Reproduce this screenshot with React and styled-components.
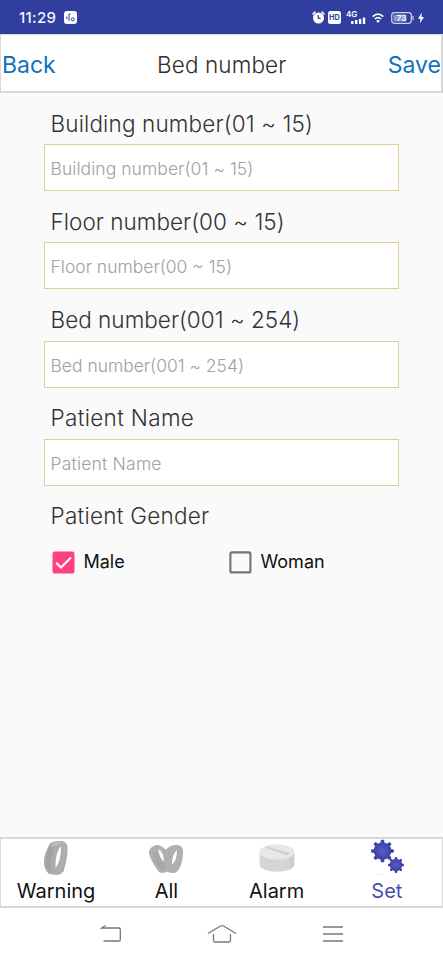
import React, {useState} from "react";
import styled, {createGlobalStyle} from "styled-components";

const GlobalStyle = createGlobalStyle`
    * {
        box-sizing: border-box;
    }
    body {
        margin: 0;
        background: #fafafa;
        font-family: Inter, "Liberation Sans", sans-serif;
    }
`;

const Screen = styled("div")`
    width: 443px;
    height: 960px;
    display: flex;
    flex-direction: column;
    overflow: hidden;
    background: #fafafa;
`;

const StatusBar = styled("div")`
    height: 34px;
    flex: none;
    display: flex;
    align-items: center;
    justify-content: space-between;
    padding: 1px 19px 0 19px;
    background: #303f9f;
    color: #f4f5ff;
`;

const StatusGroup = styled("div")`
    display: flex;
    align-items: center;
    gap: ${({$gap}) => $gap}px;
    & svg {
        display: block;
    }
`;

const Clock = styled("span")`
    font-size: 15px;
    font-weight: 500;
    line-height: 18px;
    letter-spacing: 0.3px;
`;

const Header = styled("div")`
    height: 59px;
    flex: none;
    display: flex;
    align-items: center;
    justify-content: space-between;
    border: 2px solid #d8d8d8;
    border-top-width: 1px;
    border-left-width: 1px;
    background: #fff;
    padding: 4px 0 0 1px;
`;

const HeaderAction = styled("button")`
    border: 0;
    padding: 0;
    background: none;
    font-family: inherit;
    font-size: 23px;
    line-height: 28px;
    color: #1370bd;
`;

const Title = styled("span")`
    font-size: 22.5px;
    font-weight: 350;
    line-height: 28px;
    color: #2e2e2e;
    letter-spacing: 0.1px;
`;

const Form = styled("div")`
    flex: 1;
    padding: 0 44px;
`;

const Label = styled("label")`
    display: block;
    height: 51.2px;
    padding: 15.5px 0 0 6.5px;
    font-size: 22.5px;
    font-weight: 350;
    line-height: 30px;
    color: #333;
    white-space: nowrap;
    letter-spacing: ${({$spacing}) => $spacing}px;
`;

const Input = styled("input")`
    display: block;
    width: 355px;
    height: 47px;
    padding: 3px 6px 1px 5.5px;
    border: 1px solid #dfcf9f;
    border-radius: 0;
    outline: none;
    background: #fff;
    font-family: inherit;
    font-size: 17.5px;
    font-weight: 350;
    letter-spacing: ${({$spacing}) => $spacing}px;
    &::placeholder {
        color: #a0a0a0;
    }
`;

const Options = styled("div")`
    display: flex;
    padding: 12.5px 0 0 8px;
`;

const Option = styled("button")`
    width: 177px;
    flex: none;
    display: flex;
    align-items: center;
    gap: 8.5px;
    padding: 0;
    border: 0;
    background: none;
    font-family: inherit;
    font-size: 18px;
    line-height: 26px;
    color: #111;
    & svg {
        display: block;
        flex: none;
    }
`;

const TabBar = styled("div")`
    height: 71px;
    flex: none;
    display: flex;
    border: 2px solid #d8d8d8;
    border-left-width: 1px;
    border-right-width: 1px;
    background: #fff;
`;

const Tab = styled("button")`
    flex: 1;
    display: flex;
    flex-direction: column;
    align-items: center;
    padding: 0;
    border: 0;
    background: none;
    font-family: inherit;
    font-size: 20px;
    line-height: 29px;
    color: ${({$active}) => ($active ? "#4450b0" : "#111")};
    & svg {
        display: block;
    }
`;

const NavBar = styled("div")`
    height: 52px;
    flex: none;
    display: flex;
    align-items: center;
    justify-content: space-between;
    padding: 0 99px;
    background: #fff;
`;

const fields = [
    {text: "Building number(01 ~ 15)", labelSpacing: 0.14, spacing: 0.06},
    {text: "Floor number(00 ~ 15)", labelSpacing: 0.03, spacing: 0},
    {text: "Bed number(001 ~ 254)", labelSpacing: 0.02, spacing: -0.02},
    {text: "Patient Name", labelSpacing: 0.32, spacing: 0.2},
];

const AppBadge = () => (
    <svg width="13" height="13" viewBox="0 0 13 13">
        <rect width="13" height="13" rx="3" fill="#fff"/>
        <path d="M2.8 5.5v2.7M5 3v7M5 3h1.5" stroke="#303f9f" fill="none"/>
        <circle cx="8.8" cy="8.3" r="1.5" stroke="#303f9f" fill="none"/>
    </svg>
);

const AlarmClock = () => (
    <svg width="13" height="13" viewBox="0 0 13 13">
        <path d="M1 3l2-2M12 3l-2-2" stroke="#fff" strokeWidth="1.6" strokeLinecap="round"/>
        <circle cx="6.5" cy="7" r="5.5" fill="#fff"/>
        <path d="M6.3 4v3.3h2.4" stroke="#303f9f" strokeWidth="1.2" fill="none"/>
    </svg>
);

const HdBadge = () => (
    <svg width="13" height="13" viewBox="0 0 13 13">
        <rect width="13" height="13" rx="2.5" fill="#fff"/>
        <text x="6.5" y="9.2" textAnchor="middle" fontSize="7.4" fontWeight="700" fill="#303f9f">HD</text>
    </svg>
);

const Signal = () => (
    <svg width="20" height="15" viewBox="0 0 20 15">
        <text x="0" y="6.8" fontSize="8" fontWeight="600" fill="#fff">4G</text>
        <path d="M6.3 11v3M10.2 10v4M14.1 9v5M18 7.5V14" stroke="#fff" strokeWidth="2.4"/>
    </svg>
);

const Wifi = () => (
    <svg width="12" height="12" viewBox="0 0 12 12" fill="none" stroke="#fff" strokeWidth="1.6">
        <path d="M.7 4.6Q6-.3 11.3 4.6M2.8 7Q6 4.2 9.2 7"/>
        <path d="M4.2 8.7Q6 7.3 7.8 8.7L6 11z" fill="#fff" stroke="none"/>
    </svg>
);

const Battery = () => (
    <svg width="23" height="12" viewBox="0 0 23 12">
        <rect x=".7" y=".7" width="19.6" height="10.6" rx="2.7" fill="none" stroke="#cdd1f3" strokeWidth="1.2"/>
        <rect x="2.4" y="2.4" width="13" height="7.2" rx="1" fill="#8d95d1"/>
        <path d="M22 4v4" stroke="#cdd1f3" strokeWidth="1.2"/>
        <text x="10.5" y="8.9" textAnchor="middle" fontSize="8" fontWeight="600" fill="#fff">73</text>
    </svg>
);

const Bolt = () => (
    <svg width="6" height="12" viewBox="0 0 6 12">
        <path d="M3.8.5L0 6.8h2.5L1.8 11.5 6 5H3.5z" fill="#fff"/>
    </svg>
);

const Checkbox = ({checked}) => (
    <svg width="23" height="23" viewBox="0 0 23 23" fill="none">
        {checked ? (
            <>
                <rect x=".5" y=".5" width="22" height="22" rx="2.2" fill="#ff4081"/>
                <path d="M4.2 11.8l4.8 4.8L19 6.5" stroke="#fff" strokeWidth="2.1"/>
            </>
        ) : (
            <rect x="1.4" y="1.4" width="20" height="20" rx="1.5" stroke="#747474" strokeWidth="2.1"/>
        )}
    </svg>
);

const BandIcon = () => (
    <svg width="30" height="38" viewBox="0 0 30 38">
        <path d="M9 4Q14 1.5 20 2q5 .5 6.5 5 .5 8-1.5 16l-2.5 9.5Q20 35.500 16 36L8 35Q4.500 32 3.500 28 2 22 4.500 14z" fill="#acacac"/>
        <path d="M8 7Q4 16 5 27l5 6Q9 18 13 8z" fill="#a2a2a2"/>
        <path d="M10 4.500Q16 2 22 3.500L17 6l-6 2z" fill="#bababa"/>
        <path d="M20 7Q14 14 14.500 29Q20.500 21 20 7z" fill="#fff"/>
        <path d="M23.500 8Q23 22 17 33" stroke="#b8b8b8" fill="none"/>
    </svg>
);

const BandPairIcon = () => (
    <svg width="36" height="38" viewBox="0 0 36 38">
        <path d="M1 12Q2 8 8 6q5-.5 8 3.500l2 1 3-2.500q3-2.500 8-2 5 .5 6 5 .5 7-2.500 16-2 5.500-6 7-4 .5-7.500-1.500-4 2.500-8 .5Q7 28 4.500 23 .5 16 1 12z" fill="#b0b0b0"/>
        <path d="M4 13l4-2 8 11 1 9-5-1-5-8z" fill="#a8a8a8"/>
        <path d="M10.500 10Q11 18 15.500 23Q16.500 14 10.500 10zM29 11Q23.500 16 24 26Q29 21 29 11z" fill="#fff"/>
    </svg>
);

const ButtonIcon = () => (
    <svg width="36" height="38" viewBox="0 0 36 38">
        <path d="M.7 13v12.5c0 9.5 34.6 9.5 34.6 0V13z" fill="#d5d5d5"/>
        <path d="M30 18v12.5q5-2 5.3-5V15z" fill="#cdcdcd"/>
        <ellipse cx="18" cy="13" rx="17.3" ry="7.8" fill="#e8e8e8"/>
        <path d="M6 8.5l3-1.3L31 14l-3 2.2z" fill="#cbcbcb"/>
        <path d="M8 8l2-.7L31 14l-1.5.8z" fill="#dedede"/>
    </svg>
);

const Gear = ({x, y, r}) => (
    <g transform={`translate(${x} ${y})`}>
        {[0, 45, 90, 135, 180, 225, 270, 315].map(a => (
            <rect key={a} x={-r * 0.16} y={-r} width={r * 0.32} height={r * 0.5} rx="1" fill="#3d40a4" transform={`rotate(${a})`}/>
        ))}
        <circle r={r * 0.78} fill="#4145ac"/>
        <circle r={r * 0.55} fill="#4b4fb6"/>
        <circle r={r * 0.25} fill="#5558bf"/>
    </g>
);

const GearsIcon = () => (
    <svg width="34" height="38" viewBox="0 0 34 38">
        <Gear x={12.5} y={12} r={11.3}/>
        <Gear x={26} y={26} r={8}/>
        <ellipse cx="9" cy="35.5" rx="4" ry=".7" fill="#ededed"/>
    </svg>
);

const NavBack = () => (
    <svg width="23" height="20" viewBox="0 0 23 20" fill="none" stroke="#777" strokeWidth="1.3">
        <path d="M6.5 1.5L2.5 4H20q1.3 0 1.3 1.3v10.4q0 1.3-1.3 1.3H4.5"/>
    </svg>
);

const NavHome = () => (
    <svg width="30" height="20" viewBox="0 0 30 20" fill="none" stroke="#777" strokeWidth="1.3">
        <path d="M1 9.5L13.5 2q1.5-.9 3 0L29 9.5M6.5 10v6.5q0 1.5 1.5 1.5h14q1.5 0 1.5-1.5V10"/>
    </svg>
);

const NavMenu = () => (
    <svg width="22" height="20" viewBox="0 0 22 20" fill="none" stroke="#777" strokeWidth="1.4">
        <path d="M1 3h20M1 10h20M1 17h20"/>
    </svg>
);

const tabs = [
    {name: "Warning", icon: <BandIcon/>},
    {name: "All", icon: <BandPairIcon/>},
    {name: "Alarm", icon: <ButtonIcon/>},
    {name: "Set", icon: <GearsIcon/>},
];

export default function App() {
    const [gender, setGender] = useState("Male");
    const [activeTab, setActiveTab] = useState("Set");

    return (
        <Screen>
            <GlobalStyle/>
            <StatusBar>
                <StatusGroup $gap={8}>
                    <Clock>11:29</Clock>
                    <AppBadge/>
                </StatusGroup>
                <StatusGroup $gap={7}>
                    <StatusGroup $gap={6}>
                        <StatusGroup $gap={5}>
                            <StatusGroup $gap={3}>
                                <AlarmClock/>
                                <HdBadge/>
                            </StatusGroup>
                            <Signal/>
                        </StatusGroup>
                        <Wifi/>
                    </StatusGroup>
                    <StatusGroup $gap={4}>
                        <Battery/>
                        <Bolt/>
                    </StatusGroup>
                </StatusGroup>
            </StatusBar>
            <Header>
                <HeaderAction>Back</HeaderAction>
                <Title>Bed number</Title>
                <HeaderAction>Save</HeaderAction>
            </Header>
            <Form>
                {fields.map(({text, labelSpacing, spacing}) => (
                    <div key={text}>
                        <Label $spacing={labelSpacing}>{text}</Label>
                        <Input placeholder={text} $spacing={spacing}/>
                    </div>
                ))}
                <Label as="div" $spacing={0.25}>Patient Gender</Label>
                <Options>
                    {["Male", "Woman"].map(name => (
                        <Option key={name} onClick={() => setGender(name)}>
                            <Checkbox checked={gender === name}/>
                            {name}
                        </Option>
                    ))}
                </Options>
            </Form>
            <TabBar>
                {tabs.map(({name, icon}) => (
                    <Tab key={name} $active={activeTab === name} onClick={() => setActiveTab(name)}>
                        {icon}
                        {name}
                    </Tab>
                ))}
            </TabBar>
            <NavBar>
                <NavBack/>
                <NavHome/>
                <NavMenu/>
            </NavBar>
        </Screen>
    );
}
